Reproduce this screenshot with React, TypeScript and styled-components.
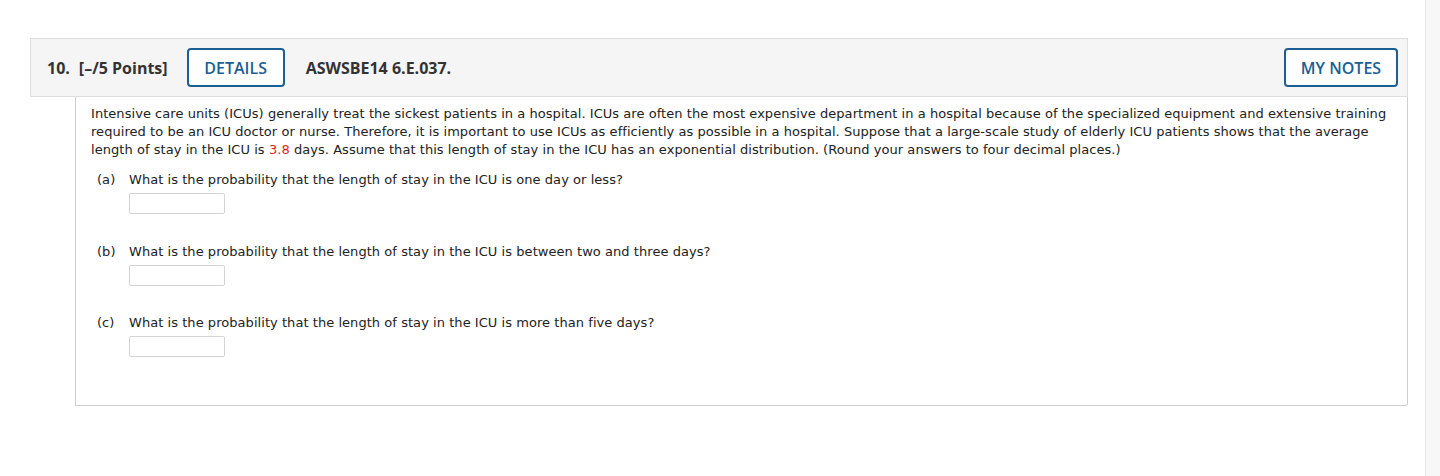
import styled, { createGlobalStyle } from "styled-components";

const GlobalStyle = createGlobalStyle`
  html, body {
    margin: 0;
    padding: 0;
    background: #fff;
  }
  body {
    font-family: "Open Sans", "Liberation Sans", sans-serif;
    color: #333;
  }
`;

const Page = styled.div`
  display: flex;
  width: 1440px;
  height: 476px;
  overflow: hidden;
`;

const Main = styled.div`
  flex: 1;
  padding: 38px 17px 0 30px;
`;

const Gutter = styled.div`
  width: 14px;
  background: #f7f7f7;
  border-left: 1px solid #e6e6e6;
`;

const Header = styled.div`
  display: flex;
  align-items: center;
  height: 57px;
  padding: 0 9px 0 16px;
  background: #f5f5f5;
  border: 1px solid #dedede;
`;

const Number = styled.span`
  font-size: 16px;
  font-weight: 700;
  margin-right: 9px;
`;

const Points = styled.span`
  font-size: 16px;
  font-weight: 700;
  margin-right: 19px;
`;

const OutlineButton = styled.button<{ $w: number }>`
  width: ${(p) => p.$w}px;
  height: 39px;
  padding: 0;
  background: #fff;
  border: 2px solid #1b5f93;
  border-radius: 4px;
  color: #1b5f93;
  font-family: "Open Sans", "Liberation Sans", sans-serif;
  font-size: 16px;
  font-weight: 600;
  cursor: pointer;
`;

const Code = styled.span`
  font-size: 16px;
  font-weight: 700;
  margin-left: 21px;
  flex: 1;
`;

const Body = styled.div`
  margin-left: 45px;
  height: 300px;
  padding: 8px 15px 0 15px;
  border: 1px solid #cfcfcf;
  border-top: none;
  border-radius: 0 0 3px 0;
  font-family: "DejaVu Sans", Verdana, sans-serif;
  font-size: 13px;
  letter-spacing: 0.05px;
  line-height: 18px;
  color: #222;
`;

const Intro = styled.p`
  margin: 0 0 12px 0;
`;

const Red = styled.span`
  color: #e81d1d;
`;

const Part = styled.div`
  display: grid;
  grid-template-columns: 32px 1fr;
  padding-left: 6px;
  margin-bottom: 28.5px;
`;

const Label = styled.span``;

const Question = styled.div`
  display: flex;
  flex-direction: column;
  gap: 4px;
`;

const Answer = styled.input`
  width: 96px;
  height: 21px;
  box-sizing: border-box;
  border: 1px solid #d4d4d4;
  border-radius: 2px;
  background: #fff;
`;

const parts = [
  { label: "(a)", text: "What is the probability that the length of stay in the ICU is one day or less?" },
  { label: "(b)", text: "What is the probability that the length of stay in the ICU is between two and three days?" },
  { label: "(c)", text: "What is the probability that the length of stay in the ICU is more than five days?" },
];

export default function App() {
  return (
    <Page>
      <GlobalStyle />
      <Main>
        <Header>
          <Number>10.</Number>
          <Points>[–/5 Points]</Points>
          <OutlineButton $w={98}>DETAILS</OutlineButton>
          <Code>ASWSBE14 6.E.037.</Code>
          <OutlineButton $w={114}>MY NOTES</OutlineButton>
        </Header>
        <Body>
          <Intro>
            Intensive care units (ICUs) generally treat the sickest patients in a hospital. ICUs are often the most
            expensive department in a hospital because of the specialized equipment and extensive training required to
            be an ICU doctor or nurse. Therefore, it is important to use ICUs as efficiently as possible in a hospital.
            Suppose that a large-scale study of elderly ICU patients shows that the average length of stay in the ICU is{" "}
            <Red>3.8</Red> days. Assume that this length of stay in the ICU has an exponential distribution. (Round
            your answers to four decimal places.)
          </Intro>
          {parts.map((p) => (
            <Part key={p.label}>
              <Label>{p.label}</Label>
              <Question>
                <span>{p.text}</span>
                <Answer type="text" />
              </Question>
            </Part>
          ))}
        </Body>
      </Main>
      <Gutter />
    </Page>
  );
}
